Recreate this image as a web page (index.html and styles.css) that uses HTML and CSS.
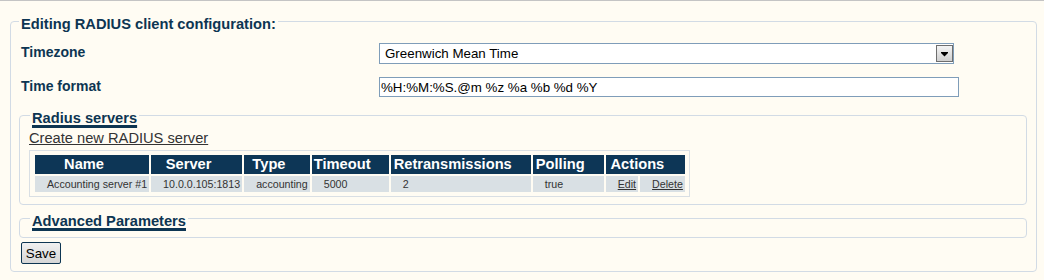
FILE: index.html
```html
<!DOCTYPE html>
<html lang="en">
<head>
    <meta charset="UTF-8">
    <title>Editing RADIUS client configuration</title>
    <link rel="stylesheet" href="styles.css">
</head>
<body>
    <form class="config-form">
        <fieldset class="main-box">
            <legend class="main-legend">Editing RADIUS client configuration:</legend>
            <div class="form-rows">
                <label class="form-label" for="timezone">Timezone</label>
                <div class="select-wrap">
                    <select id="timezone" class="tz-select">
                        <option>Greenwich Mean Time</option>
                    </select>
                    <span class="select-button">
                        <svg width="9" height="6" viewBox="0 0 9 6"><path d="M1 1h7v1L4.5 5.5 1 2z" fill="#000"/></svg>
                    </span>
                </div>
                <label class="form-label" for="timeformat">Time format</label>
                <input id="timeformat" class="text-input" type="text" value="%H:%M:%S.@m %z %a %b %d %Y">
            </div>

            <fieldset class="sub-box">
                <legend class="sub-legend"><a href="#" class="legend-link">Radius servers</a></legend>
                <a href="#" class="create-link">Create new RADIUS server</a>
                <div class="table-wrap">
                    <table class="server-table">
                        <tr>
                            <th class="col-name">Name</th>
                            <th class="col-server">Server</th>
                            <th class="col-type">Type</th>
                            <th class="col-timeout">Timeout</th>
                            <th class="col-retrans">Retransmissions</th>
                            <th class="col-polling">Polling</th>
                            <th colspan="2">Actions</th>
                        </tr>
                        <tr>
                            <td>Accounting server #1</td>
                            <td>10.0.0.105:1813</td>
                            <td>accounting</td>
                            <td>5000</td>
                            <td>2</td>
                            <td>true</td>
                            <td class="col-edit"><a href="#">Edit</a></td>
                            <td class="col-delete"><a href="#">Delete</a></td>
                        </tr>
                    </table>
                </div>
            </fieldset>

            <fieldset class="sub-box collapsed">
                <legend class="sub-legend"><a href="#" class="legend-link">Advanced Parameters</a></legend>
            </fieldset>

            <button type="button" class="save-button">Save</button>
        </fieldset>
    </form>
</body>
</html>
```

FILE: styles.css
```css
body {
    margin: 0;
    border-top: 1px solid #c4c4c4;
    background-color: #fffcf3;
    font-family: "Liberation Sans", Arial, sans-serif;
    color: #0d3552;
}
.config-form {
    margin: 0;
}
fieldset {
    border: 1px solid #d2dbe5;
    border-radius: 4px;
}
legend {
    padding: 6px 2px 0 2px;
    font-size: 14.667px;
    font-weight: bold;
    line-height: 17px;
    color: #0d3552;
}
.main-box {
    margin: 9px 7px 0 10px;
    padding: 0 9px 7px 8px;
}
.form-rows {
    display: grid;
    grid-template-columns: 358px 1fr;
    row-gap: 13px;
    align-items: start;
    margin-top: 10px;
    padding-left: 2px;
}
.form-label {
    padding-top: 1px;
    font-size: 14px;
    line-height: 16px;
    font-weight: bold;
}
.select-wrap {
    position: relative;
    width: 575px;
    height: 21px;
}
.tz-select {
    appearance: none;
    -webkit-appearance: none;
    box-sizing: border-box;
    width: 100%;
    height: 21px;
    margin: 0;
    padding: 0 0 0 5px;
    border: 1px solid #7f9db9;
    border-radius: 0;
    background: #fff;
    font-family: "Liberation Sans", Arial, sans-serif;
    font-size: 13.333px;
    color: #000;
}
.select-button {
    position: absolute;
    top: 2px;
    right: 1px;
    box-sizing: border-box;
    width: 17px;
    height: 17px;
    border: 1px solid #6e6e6e;
    background: linear-gradient(#f4f4f4, #cfcfcf);
    display: flex;
    align-items: center;
    justify-content: center;
}
.text-input {
    box-sizing: border-box;
    width: 580px;
    height: 20px;
    margin: 0;
    padding: 0 1px;
    border: 1px solid #7f9db9;
    background: #fff;
    font-family: "Liberation Sans", Arial, sans-serif;
    font-size: 13.333px;
    color: #000;
}
.sub-box {
    margin: 7px 0 0 0;
    padding: 3px 0 7px 9px;
}
.sub-box.collapsed {
    margin-top: 2px;
    padding-top: 0;
    padding-bottom: 7px;
}
.sub-legend {
    margin-left: 1px;
}
.legend-link {
    color: #0d3552;
    text-decoration: underline;
    text-decoration-thickness: 3px;
    text-underline-offset: 2px;
}
.create-link {
    display: block;
    width: max-content;
    font-size: 14.667px;
    line-height: 17px;
    color: #333;
}
.table-wrap {
    width: max-content;
    margin-top: 3px;
    padding: 2px 2px 2px 3px;
    border: 1px solid #d9dfe4;
}
.server-table {
    border-spacing: 2px;
}
.server-table th {
    padding: 1px 18px 1px 2px;
    background-color: #0d3656;
    color: #fff;
    font-size: 14.667px;
    line-height: 17px;
    white-space: nowrap;
}
.server-table td {
    padding: 2px 2px 2px 12px;
    background-color: #d9e0e4;
    color: #333;
    font-size: 10.667px;
    line-height: 12px;
    white-space: nowrap;
}
.server-table td a {
    color: #333;
}
.col-name { width: 94px; }
.col-server { width: 71px; }
.col-type { width: 45px; }
.col-timeout { width: 57px; }
.col-retrans { width: 120px; }
.col-polling { width: 51px; }
.col-edit { width: 18px; }
.col-delete { width: 31px; }
.save-button {
    display: block;
    box-sizing: border-box;
    width: 40px;
    height: 22px;
    margin: 4px 0 0 2px;
    padding: 0;
    border: 1px solid #0d3552;
    border-radius: 2px;
    background: linear-gradient(#f0f0f0, #d6d6d6);
    font-family: "Liberation Sans", Arial, sans-serif;
    font-size: 13.333px;
    color: #000;
}
```
